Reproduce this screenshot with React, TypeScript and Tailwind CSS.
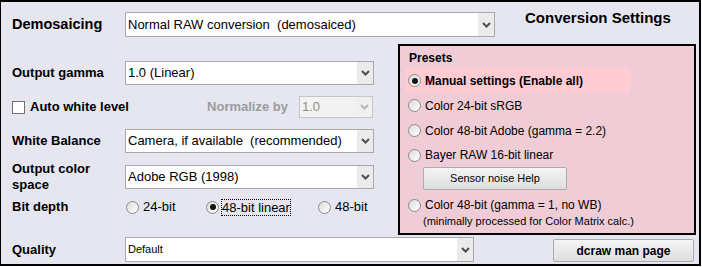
import React from 'react';

const Chevron = ({ disabled }: { disabled?: boolean }) => (
  <svg width="9" height="6" viewBox="0 0 9 6">
    <path d="M1 1 L4.5 4.5 L8 1" fill="none" stroke={disabled ? '#b4b4b4' : '#4f4f4f'} strokeWidth="2" />
  </svg>
);

const Select = ({
  value,
  className,
  disabled,
  textClass = 'text-[13px]',
}: {
  value: string;
  className: string;
  disabled?: boolean;
  textClass?: string;
}) => (
  <div
    className={`flex border ${
      disabled ? 'border-[#c6c6c6] bg-[#f2f2f2] text-[#8d8d8d]' : 'border-[#a9a9a9] bg-white text-black'
    } ${className}`}
  >
    <div className={`flex-1 flex items-center pl-[2px] whitespace-pre ${textClass}`}>{value}</div>
    <div className={`w-[16px] flex items-center justify-center ${disabled ? 'bg-[#f0f0f0]' : 'bg-[#ebebeb]'}`}>
      <Chevron disabled={disabled} />
    </div>
  </div>
);

const Radio = ({ checked }: { checked?: boolean }) => (
  <span className="w-[13px] h-[13px] shrink-0 rounded-full border border-[#8a8a8a] bg-linear-to-br from-[#dcdcdc] to-white flex items-center justify-center">
    {checked && <span className="w-[6px] h-[6px] rounded-full bg-[#141414]" />}
  </span>
);

const Label = ({ children }: { children: React.ReactNode }) => (
  <div className="w-[124px] pl-[11px] text-[13px] font-bold leading-[16px] flex items-center">{children}</div>
);

export default function App() {
  return (
    <div className="w-[701px] h-[266px] border-t-2 border-b-2 border-r-2 border-l border-black bg-[#e6e6f0] font-['Liberation_Sans',Arial,sans-serif] text-black flex flex-col">
      {/* top row */}
      <div className="flex items-start h-[42px]">
        <div className="w-[124px] pl-[11px] h-[25px] mt-[10px] flex items-center text-[14.5px] font-bold">Demosaicing</div>
        <Select value="Normal RAW conversion  (demosaiced)" className="w-[370px] h-[25px] mt-[10px]" />
        <div className="ml-[30px] mt-[7px] text-[15px] font-bold leading-[18px]">Conversion Settings</div>
      </div>

      {/* middle */}
      <div className="flex h-[191px]">
        <div className="w-[397px] flex flex-col pt-[17px]">
          <div className="flex h-[24px]">
            <Label>Output gamma</Label>
            <Select value="1.0 (Linear)" className="w-[249px]" />
          </div>

          <div className="flex items-center h-[22px] mt-[11px]">
            <div className="pl-[11px] flex items-center gap-[5px]">
              <span className="w-[13px] h-[13px] border border-[#707070] bg-white" />
              <span className="text-[13px] font-bold">Auto white level</span>
            </div>
            <div className="ml-auto mr-[25px] flex items-center h-full">
              <span className="text-[13px] font-bold text-[#9c9c9c] mr-[11px]">Normalize by</span>
              <Select value="1.0" disabled className="w-[74px] h-full" />
            </div>
          </div>

          <div className="flex h-[24px] mt-[11px]">
            <Label>White Balance</Label>
            <Select value="Camera, if available  (recommended)" className="w-[249px]" />
          </div>

          <div className="flex h-[24px] mt-[12px]">
            <div className="w-[124px] pl-[11px] text-[13px] font-bold leading-[16px] flex items-center">
              <span className="w-[100px]">Output color space</span>
            </div>
            <Select value="Adobe RGB (1998)" className="w-[249px]" />
          </div>

          <div className="flex h-[20px] mt-[8px] items-center">
            <Label>Bit depth</Label>
            <div className="flex items-center text-[13px] pl-[1px]">
              <div className="w-[80px] flex items-center gap-[4px]">
                <Radio />
                <span>24-bit</span>
              </div>
              <div className="w-[112px] flex items-center gap-[3px]">
                <Radio checked />
                <span className="outline outline-1 outline-dotted outline-black leading-[15px]">48-bit linear</span>
              </div>
              <div className="flex items-center gap-[4px]">
                <Radio />
                <span>48-bit</span>
              </div>
            </div>
          </div>
        </div>

        {/* presets panel */}
        <div className="w-[298px] h-[191px] border-2 border-black bg-[#f0cdd6] flex flex-col text-[12px]">
          <div className="pl-[9px] pt-[5px] font-bold leading-[14px]">Presets</div>
          <div className="ml-[5px] mt-[3px] w-[225px] h-[25px] bg-[#ffccd4] flex items-center gap-[4px] pl-[3px] font-bold">
            <Radio checked />
            <span>Manual settings (Enable all)</span>
          </div>
          <div className="ml-[5px] h-[25px] flex items-center gap-[4px] pl-[3px]">
            <Radio />
            <span>Color 24-bit sRGB</span>
          </div>
          <div className="ml-[5px] h-[25px] flex items-center gap-[4px] pl-[3px]">
            <Radio />
            <span>Color 48-bit Adobe (gamma = 2.2)</span>
          </div>
          <div className="ml-[5px] h-[24px] flex items-center gap-[4px] pl-[3px]">
            <Radio />
            <span>Bayer RAW 16-bit linear</span>
          </div>
          <button className="ml-[23px] w-[144px] h-[23px] border border-[#acacac] rounded-[2px] bg-linear-to-b from-[#f4f4f4] to-[#dedede] text-[11px] flex items-center justify-center">
            Sensor noise Help
          </button>
          <div className="ml-[5px] mt-[5px] h-[20px] flex items-center gap-[4px] pl-[3px]">
            <Radio />
            <span>Color 48-bit (gamma = 1, no WB)</span>
          </div>
          <div className="ml-[23px] text-[11px] leading-[13px]">(minimally processed for Color Matrix calc.)</div>
        </div>
      </div>

      {/* bottom row */}
      <div className="flex items-start flex-1">
        <div className="w-[124px] pl-[11px] h-[25px] mt-[2px] flex items-center text-[13px] font-bold">Quality</div>
        <Select value="Default" textClass="text-[11px]" className="w-[349px] h-[25px] mt-[2px]" />
        <button className="ml-auto mr-[5px] mt-[4px] w-[141px] h-[23px] border border-[#acacac] rounded-[2px] bg-linear-to-b from-[#f4f4f4] to-[#dedede] text-[12px] font-bold flex items-center justify-center">
          dcraw man page
        </button>
      </div>
    </div>
  );
}
